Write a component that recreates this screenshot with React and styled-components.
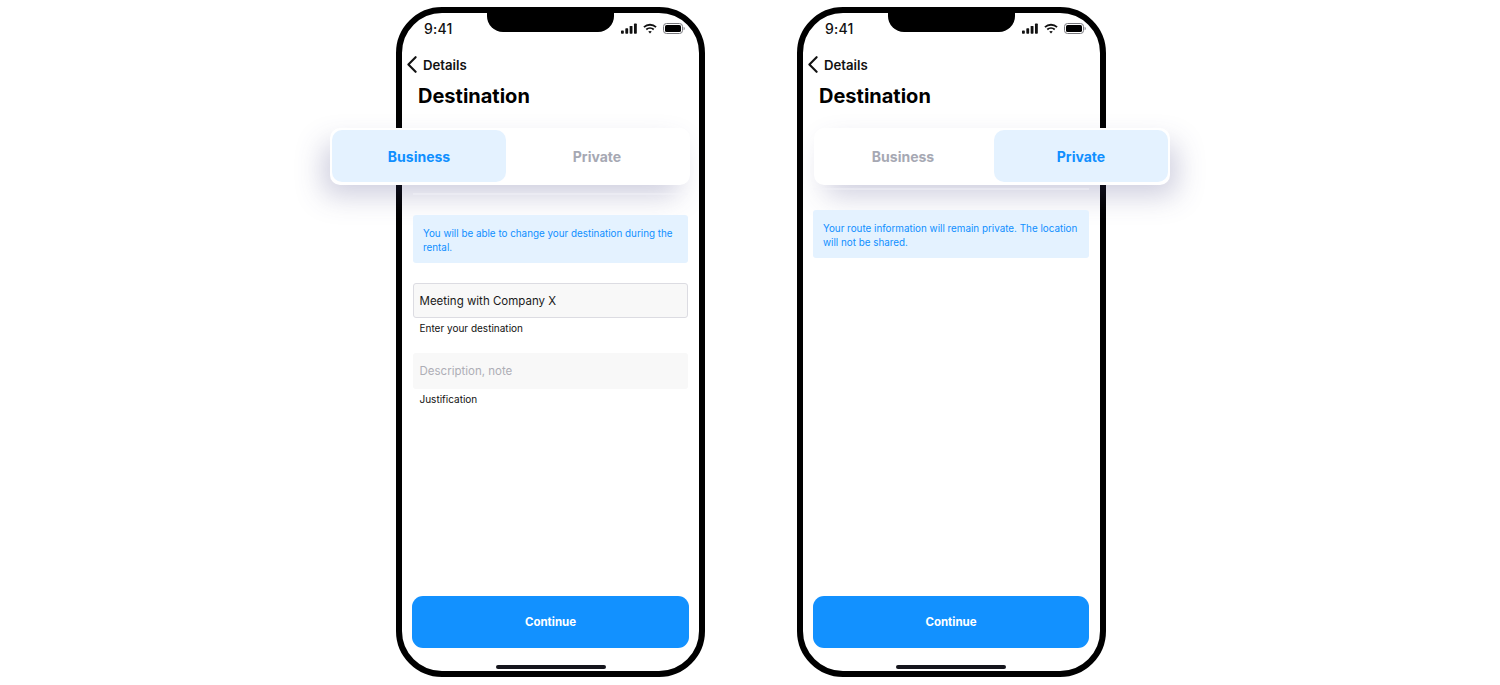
import React from "react";
import styled, { createGlobalStyle } from "styled-components";

const Global = createGlobalStyle`
  html, body { margin: 0; padding: 0; background: #fff; }
  body { font-family: Inter, "Liberation Sans", sans-serif; overflow: hidden; }
`;
const Page = styled.div`
  width: 1500px; height: 685px; box-sizing: border-box;
  padding: 7px 0 0 396px; display: flex; gap: 92px; align-items: flex-start;
`;
const Phone = styled.section`
  position: relative; width: 309px; height: 670px; box-sizing: border-box;
  border: 6px solid #000; border-radius: 46px; background: #fff;
  display: flex; flex-direction: column;
`;
const Notch = styled.div`
  position: absolute; top: -1px; left: 84.5px; width: 127.5px; height: 20px;
  background: #000; border-radius: 0 0 16px 16px;
`;
const StatusBar = styled.div`
  height: 30px; padding: 0 14px 0 22px; box-sizing: border-box;
  display: flex; justify-content: space-between; align-items: center;
`;
const Time = styled.span`
  font-size: 14px; font-weight: 500; color: #111; letter-spacing: 0.2px;
`;
const StatusIcons = styled.div`display: flex; align-items: center; gap: 6px;`;
const Nav = styled.div`
  margin-top: 13px; padding-left: 5px; height: 18px;
  display: flex; align-items: center; gap: 6px;
  font-size: 13.2px; font-weight: 600; color: #111;
  svg { margin-top: -2px; }
`;
const Title = styled.h1`
  margin: 9px 0 0 16px; font-size: 20px; line-height: 26px; font-weight: 700; color: #000;
`;
const Segmented = styled.div`
  position: absolute; top: 115px; left: ${p => p.$left}px; width: ${p => p.$width}px; height: 57px;
  box-sizing: border-box; padding: 2px; display: flex; gap: ${p => p.$gap}px; z-index: 3;
  background: #fff; border-radius: 10px;
  box-shadow: ${p => p.$shadowX}px 13px 28px -2px rgba(70, 70, 130, 0.26);
`;
const Seg = styled.div`
  flex: ${p => (p.$wide ? "1 1 0" : "0 0 174px")}; height: 52px; border-radius: 10px;
  display: flex; align-items: center; justify-content: center;
  font-size: 14px; font-weight: 700;
  color: ${p => (p.$active ? "#0f8fff" : "#a6a8b3")};
  background: ${p => (p.$active ? "#e4f2ff" : "transparent")};
`;
const Content = styled.div`
  flex: 1; display: flex; flex-direction: column; padding: ${p => p.$top}px 11px 0 ${p => p.$padLeft}px;
`;
const Rule = styled.div`
  position: relative; z-index: 4; height: 2px; margin-bottom: 20px; background: rgba(244, 244, 249, 0.4);
`;
const Info = styled.div`
  position: relative; z-index: 4;
  box-sizing: border-box; height: 48px; padding: 11px 8px 0 10px; border-radius: 3px;
  background: #e4f2ff; color: #0f8fff; font-size: 9.85px; line-height: 14px;
`;
const Field = styled.div`
  box-sizing: border-box; height: ${p => (p.$filled ? 35 : 36)}px; margin-top: ${p => p.$mt}px;
  padding-left: ${p => (p.$filled ? 5.5 : 6.5)}px;
  display: flex; align-items: center; border-radius: 3px; background: #f8f8f8;
  border: ${p => (p.$filled ? "1px solid #dcdce2" : "none")};
  font-size: 11.5px; color: ${p => (p.$filled ? "#1a1a1a" : "#aeaeb6")};
`;
const Label = styled.div`
  margin: 3.5px 0 0 6.5px; font-size: 10px; line-height: 12px; color: #111;
`;
const Footer = styled.div`
  padding: 0 ${p => p.$padRight}px 0 10px; display: flex; flex-direction: column; align-items: center;
`;
const Cta = styled.button`
  width: 100%; height: 52px; border: 0; border-radius: 11px; background: #1291ff;
  color: #fff; font: 700 11.5px Inter, "Liberation Sans", sans-serif;
`;
const Home = styled.div`
  width: 110px; height: 4px; margin: 17px 0 2px; border-radius: 2px; background: #15151c;
`;

const Signal = () => (
  <svg width="16" height="11" viewBox="0 0 17 11" fill="#111">
    <rect x="0" y="7.5" width="3" height="3.5" rx="0.7" />
    <rect x="4.6" y="5.2" width="3" height="5.8" rx="0.7" />
    <rect x="9.2" y="2.8" width="3" height="8.2" rx="0.7" />
    <rect x="13.8" y="0.3" width="3" height="10.7" rx="0.7" />
  </svg>
);
const Wifi = () => (
  <svg width="14" height="11" viewBox="0 0 15 11" fill="none" stroke="#111" strokeWidth="1.9">
    <path d="M1 4.1C4.7.6 10.3.6 14 4.1" />
    <path d="M3.5 6.6c2.3-2.1 5.7-2.1 8 0" />
    <path d="M7.5 10.8 5.6 8.8c1.1-.9 2.7-.9 3.8 0z" fill="#111" stroke="none" />
  </svg>
);
const Battery = () => (
  <svg width="22" height="11" viewBox="0 0 22 11">
    <rect x="0.5" y="0.5" width="19" height="10" rx="3" fill="none" stroke="#77777c" />
    <rect x="2" y="2" width="16" height="7" rx="1.6" fill="#000" />
    <path d="M20.6 3.8c.8.3 1.2 1 1.2 1.7s-.4 1.4-1.2 1.7z" fill="#88888c" />
  </svg>
);
const Back = () => (
  <svg width="10" height="17" viewBox="0 0 10 17" fill="none" stroke="#111" strokeWidth="2.1" strokeLinecap="round" strokeLinejoin="round">
    <path d="M8.6 1.2 1.4 8.5l7.2 7.3" />
  </svg>
);

function Device({ active, segLeft, segWidth, segGap, shadowX, top, padLeft, padRight, info, children }) {
  return (
    <Phone>
      <Notch />
      <StatusBar>
        <Time>9:41</Time>
        <StatusIcons><Signal /><Wifi /><Battery /></StatusIcons>
      </StatusBar>
      <Nav><Back />Details</Nav>
      <Title>Destination</Title>
      <Segmented $left={segLeft} $width={segWidth} $gap={segGap} $shadowX={shadowX}>
        <Seg $active={active === "Business"}>Business</Seg>
        <Seg $active={active === "Private"} $wide>Private</Seg>
      </Segmented>
      <Content $top={top} $padLeft={padLeft}>
        <Rule />
        <Info>{info}</Info>
        {children}
      </Content>
      <Footer $padRight={padRight}>
        <Cta>Continue</Cta>
        <Home />
      </Footer>
    </Phone>
  );
}

export default function App() {
  return (
    <Page>
      <Global />
      <Device active="Business" segLeft={-72} segWidth={360} segGap={0} shadowX={-9} top={84} padLeft={11} padRight={10}
        info="You will be able to change your destination during the rental.">
        <Field $filled $mt={20}>Meeting with Company X</Field>
        <Label>Enter your destination</Label>
        <Field $mt={19.5}>Description, note</Field>
        <Label>Justification</Label>
      </Device>
      <Device active="Private" segLeft={11} segWidth={356} segGap={4} shadowX={9} top={79} padLeft={10} padRight={11}
        info="Your route information will remain private. The location will not be shared." />
    </Page>
  );
}
